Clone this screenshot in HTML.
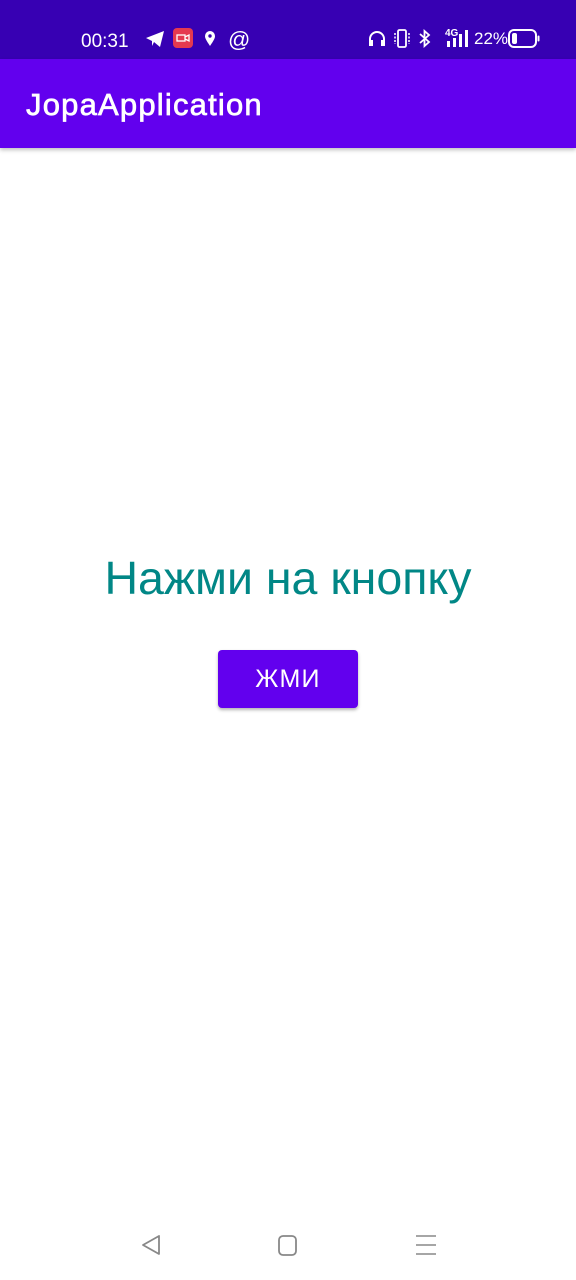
<!DOCTYPE html>
<html><head><meta charset="utf-8"><style>
*{margin:0;padding:0;box-sizing:border-box}
body{width:576px;height:1280px;background:#fff;font-family:"Liberation Sans","DejaVu Sans",sans-serif;position:relative;overflow:hidden}
.sb{position:absolute;top:0;left:0;width:576px;height:59px;background:#3700B3;color:#fff}
.ab{position:absolute;top:59px;left:0;width:576px;height:89px;background:#6200EE;box-shadow:0 2px 4px rgba(0,0,0,.25)}
.ab span{position:absolute;left:26px;top:28px;color:#fff;font-size:31px;font-weight:normal;-webkit-text-stroke:0.7px #fff;letter-spacing:1.2px}
.t{position:absolute;top:31px;font-size:19px}
h1{position:absolute;top:551px;left:0;width:576px;text-align:center;font-weight:normal;font-size:46.5px;color:#018786}
.btn{position:absolute;left:218px;top:650px;width:140px;height:58px;background:#6200EE;border-radius:4px;box-shadow:0 2px 3px rgba(0,0,0,.3);color:#fff;font-size:25px;text-align:center;line-height:58px;letter-spacing:1.2px}
svg{position:absolute}
</style></head><body>
<div class="sb">
<div class="t" style="left:81px">00:31</div>
<svg style="left:145px;top:30px" width="20" height="18" viewBox="0 0 20 18"><path d="M1 8 L19 1 L15 17 L9 12 L7 16 L7 11 Z" fill="#fff"/></svg>
<svg style="left:173px;top:28px" width="20" height="20"><rect width="20" height="20" rx="4" fill="#e53950"/><rect x="4" y="7" width="8" height="6" fill="none" stroke="#fff" stroke-width="1.3"/><path d="M12 9 L16 7 L16 13 L12 11" fill="none" stroke="#fff" stroke-width="1.3"/></svg>
<svg style="left:204px;top:31px" width="12" height="15"><path d="M6 15 C2 9 1 7 1 5 A5 5 0 0 1 11 5 C11 7 10 9 6 15Z" fill="#fff"/><circle cx="6" cy="5" r="1.7" fill="#3700B3"/></svg>
<div class="t" style="left:228px;top:27px;font-size:22px">@</div>
<svg style="left:368px;top:30px" width="18" height="17"><path d="M2 15 V9 A7 7 0 0 1 16 9 V15" fill="none" stroke="#fff" stroke-width="2"/><rect x="1" y="10" width="4" height="6" fill="#fff"/><rect x="13" y="10" width="4" height="6" fill="#fff"/></svg>
<svg style="left:393px;top:29px" width="18" height="19"><rect x="5" y="1" width="8" height="17" rx="1.5" fill="none" stroke="#fff" stroke-width="1.8"/><path d="M2 4V15M16 4V15" stroke="#fff" stroke-width="1.5" stroke-dasharray="2 1.5"/></svg>
<svg style="left:418px;top:29px" width="13" height="19"><path d="M2 5 L11 13 L6.5 17 V2 L11 6 L2 14" fill="none" stroke="#fff" stroke-width="1.8"/></svg>
<div style="position:absolute;left:445px;top:28px;color:#fff;font-size:10px;font-weight:bold">4G</div>
<svg style="left:446px;top:30px" width="24" height="17"><rect x="1" y="11" width="3" height="6" fill="#fff"/><rect x="7" y="8" width="3" height="9" fill="#fff"/><rect x="13" y="4" width="3" height="13" fill="#fff"/><rect x="19" y="0" width="3" height="17" fill="#fff"/></svg>
<div class="t" style="left:474px;top:29px;font-size:17px">22%</div>
<svg style="left:508px;top:29px" width="32" height="19"><rect x="1" y="1" width="27" height="17" rx="5" fill="none" stroke="#fff" stroke-width="2"/><rect x="4" y="4" width="5" height="11" rx="2" fill="#fff"/><rect x="29.5" y="6.5" width="2" height="6" rx="1" fill="#fff"/></svg>
</div>
<div class="ab"><span>JopaApplication</span></div>
<h1>Нажми на кнопку</h1>
<div class="btn">ЖМИ</div>
<svg style="left:140px;top:1234px" width="22" height="22"><path d="M3 11 L19 2 L19 20 Z" fill="none" stroke="#888" stroke-width="1.8" stroke-linejoin="round"/></svg>
<svg style="left:277px;top:1234px" width="22" height="22"><rect x="2" y="2" width="17" height="19" rx="4" fill="none" stroke="#888" stroke-width="1.8"/></svg>
<svg style="left:414px;top:1234px" width="24" height="22"><path d="M2 2H22M2 11H22M2 20H22" stroke="#888" stroke-width="1.6"/></svg>
</body></html>
